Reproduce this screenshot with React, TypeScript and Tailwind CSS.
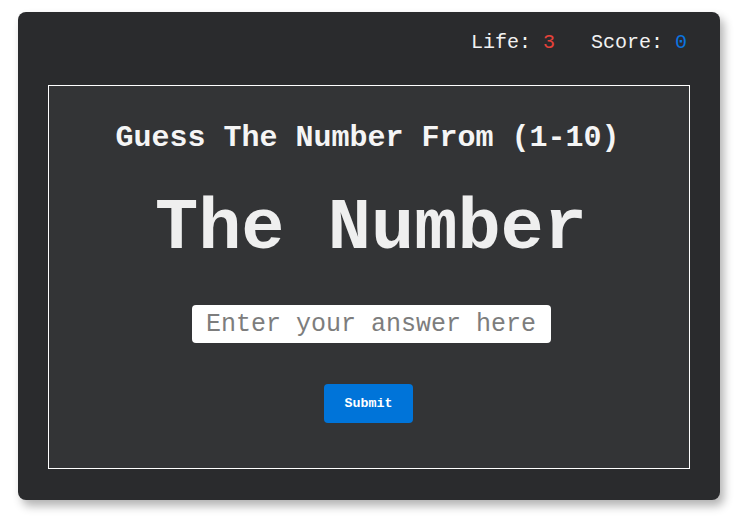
import React from "react";

export default function App() {
  const mono = { fontFamily: '"Liberation Mono", "Courier New", monospace' };
  return (
    <div className="min-h-[517px] w-[742px] bg-white pt-[12px] pl-[18px]" style={mono}>
      <div className="w-[702px] h-[488px] rounded-[8px] bg-[#2a2b2d] px-[30px] pt-[19px] pb-[31px] flex flex-col shadow-[4px_6px_10px_rgba(0,0,0,0.3)]">
        <div className="flex justify-end text-[20px] leading-[24px] text-[#f2f2f2] whitespace-pre mb-[30px] pr-[3px]">
          <span>Life: <span className="text-[#e5423a]">3</span>   Score: <span className="text-[#0a74e0]">0</span></span>
        </div>
        <div className="flex-1 border border-white bg-[#333436] flex flex-col items-center pt-[34px]">
          <h1 className="text-[30px] leading-[36px] font-bold text-[#f5f5f5] mr-[3px]">Guess The Number From (1-10)</h1>
          <div className="mt-[33px] text-[72px] leading-[80px] font-bold text-[#efefef] ml-[4px]">The Number</div>
          <input
            className="mt-[36px] ml-[5px] w-[359px] h-[38px] rounded-[4px] bg-white px-[14px] text-[25px] text-black placeholder:text-[#7d7d7d] outline-none"
            style={mono}
            placeholder="Enter your answer here"
          />
          <button
            className="mt-[41px] mr-[1px] w-[89px] h-[39px] rounded-[4px] bg-[#0074d9] text-white text-[13.333px] font-bold"
            style={mono}
          >
            Submit
          </button>
        </div>
      </div>
    </div>
  );
}
